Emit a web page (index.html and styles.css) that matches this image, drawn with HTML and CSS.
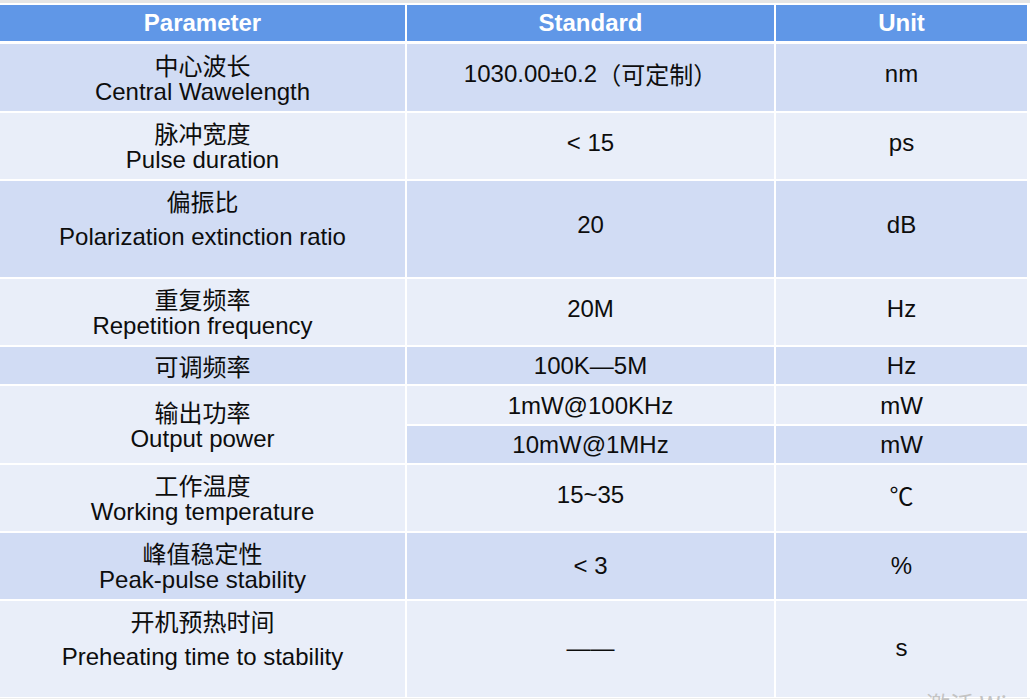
FILE: index.html
```html
<!DOCTYPE html>
<html lang="zh">
<head>
<meta charset="utf-8">
<title>Parameters</title>
<link rel="stylesheet" href="styles.css">
</head>
<body>
<div class="topbar"></div>
<div class="spec">
  <div class="cell head">Parameter</div>
  <div class="cell head">Standard</div>
  <div class="cell head">Unit</div>

  <div class="cell dark name"><span class="cn">中心波长</span><span>Central Wawelength</span></div>
  <div class="cell dark val">1030.00±0.2<span class="cn">（可定制）</span></div>
  <div class="cell dark val">nm</div>

  <div class="cell light name"><span class="cn">脉冲宽度</span><span>Pulse duration</span></div>
  <div class="cell light val">&lt; 15</div>
  <div class="cell light val">ps</div>

  <div class="cell dark name tall"><span class="cn">偏振比</span><span>Polarization extinction ratio</span></div>
  <div class="cell dark val tallval">20</div>
  <div class="cell dark val tallval">dB</div>

  <div class="cell light name"><span class="cn">重复频率</span><span>Repetition frequency</span></div>
  <div class="cell light val">20M</div>
  <div class="cell light val">Hz</div>

  <div class="cell dark single"><span class="cn">可调频率</span></div>
  <div class="cell dark single">100K—5M</div>
  <div class="cell dark single">Hz</div>

  <div class="cell light name span2"><span class="cn">输出功率</span><span>Output power</span></div>
  <div class="cell light single">1mW@100KHz</div>
  <div class="cell light single">mW</div>
  <div class="cell dark single">10mW@1MHz</div>
  <div class="cell dark single">mW</div>

  <div class="cell light name"><span class="cn">工作温度</span><span>Working temperature</span></div>
  <div class="cell light val">15~35</div>
  <div class="cell light val"><span class="cn">℃</span></div>

  <div class="cell dark name"><span class="cn">峰值稳定性</span><span>Peak-pulse stability</span></div>
  <div class="cell dark val mid">&lt; 3</div>
  <div class="cell dark val mid">%</div>

  <div class="cell light name tall"><span class="cn">开机预热时间</span><span>Preheating time to stability</span></div>
  <div class="cell light val lastval">——</div>
  <div class="cell light val lastval">s</div>
</div>
<div class="bottom"></div>
<div class="watermark">激活 Windows</div>
</body>
</html>
```

FILE: styles.css
```css
html, body {
  margin: 0;
  padding: 0;
  background: #ffffff;
  overflow: hidden;
  height: 700px;
}

body {
  position: relative;
  font-family: "Liberation Sans", Arial, "Noto Sans CJK SC", sans-serif;
  color: #0d0d0d;
}

.topbar {
  height: 3px;
  background: #e5e5e5;
  margin-bottom: 2px;
}

.spec {
  display: grid;
  width: 1027px;
  grid-template-columns: 405px 367px 251px;
  grid-template-rows: 37px 67px 66px 96px 66px 37px 38px 37px 66px 66px 96px;
  column-gap: 2px;
  row-gap: 2px;
}

.spec .head {
  margin-bottom: 1px;
}

.cell {
  display: flex;
  flex-direction: column;
  align-items: center;
  justify-content: center;
  font-size: 24px;
  line-height: 27px;
  text-align: center;
  white-space: nowrap;
}

.cell.val,
.cell.single {
  flex-direction: row;
}

.cn {
  font-family: "Noto Sans CJK SC", "Liberation Sans", sans-serif;
  font-size: 24px;
}

.head {
  background: #6097e7;
  color: #ffffff;
  font-weight: bold;
  line-height: 30px;
}

.dark {
  background: #d1dcf4;
}

.light {
  background: #e9eef9;
}

.name {
  padding-bottom: 0;
}

.val {
  padding-bottom: 8px;
}

.val.mid {
  padding-bottom: 2px;
}

.tall {
  line-height: 36px;
  padding-bottom: 20px;
}

.tallval {
  padding-bottom: 10px;
}

.lastval {
  padding-bottom: 4px;
}

.span2 {
  grid-row: span 2;
}

.bottom {
  height: 1px;
  margin-top: 1px;
  background: #eeeeee;
}

.watermark {
  position: absolute;
  left: 926px;
  top: 686px;
  font-family: "Noto Sans CJK SC", "Liberation Sans", sans-serif;
  font-size: 24px;
  color: #c4c4c4;
  white-space: nowrap;
}
```
